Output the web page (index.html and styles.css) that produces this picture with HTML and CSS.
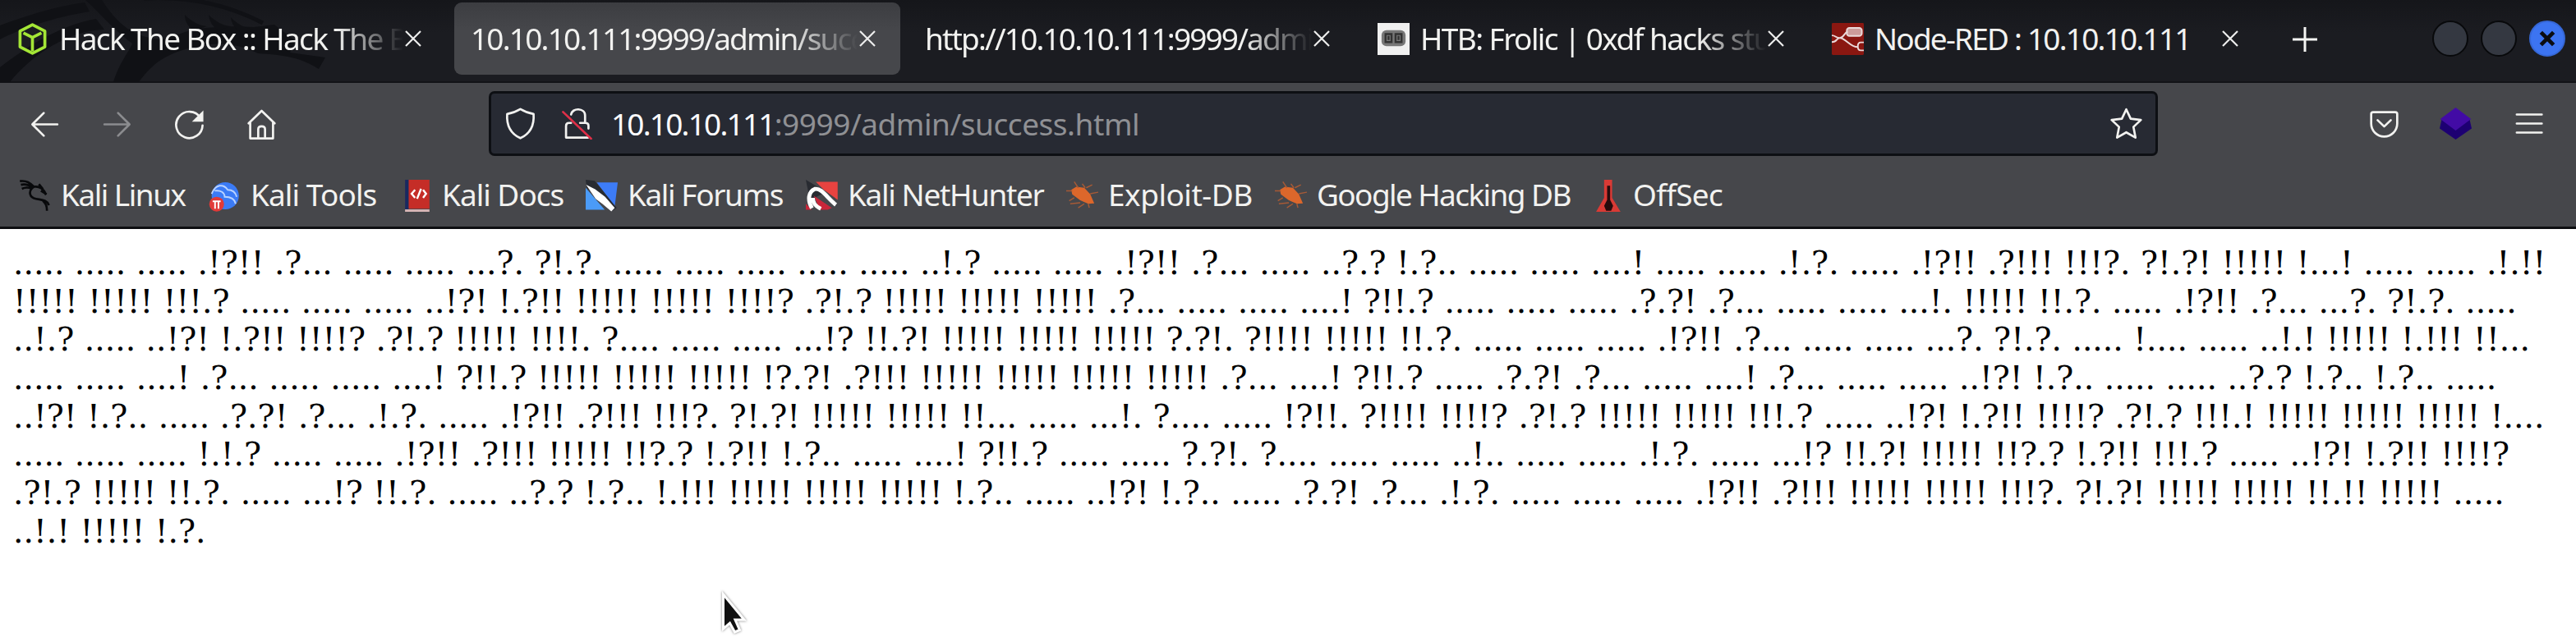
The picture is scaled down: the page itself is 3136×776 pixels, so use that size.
FILE: index.html
```html
<!DOCTYPE html>
<html lang="en">
<head>
<meta charset="utf-8">
<title>10.10.10.111:9999/admin/success.html</title>
<link rel="stylesheet" href="styles.css">
</head>
<body>
<header class="tabbar">
  <svg class="dragon" width="400" height="100" viewBox="0 0 400 100">
    <path class="shade" d="M0 31C30 20 65 8 103 3l6 11C65 21 25 35 0 48zM0 82C35 55 75 30 117 23l10 13C85 37 40 65 12 100H0zM104 0h20c18 28 38 47 75 48l35-12c25-3 45-5 75-3l25-3 26 20-7 14 43 6-8 14c-22-14-42-17-74-19-25-12-45-13-65-10-43 7-62 20-80 45h-31c8-25 18-35 23-47-22-16-42-40-57-53z"/>
    <path class="shade" d="M225 18c9 9 17 13 27 14l-16 5c-7-4-11-11-11-19zM254 18c9 9 17 13 27 14l-15 5c-7-4-11-11-12-19zM281 21c8 9 19 14 32 16l-18 4c-8-5-13-11-14-20z"/>
    <path class="line" d="M175-2c56-3 105 9 145 30"/>
  </svg>
  <div class="tab">
    <svg class="ico" viewBox="0 0 16 16"><g fill="none" stroke="#a4e636" stroke-width="1.5" stroke-linejoin="round"><path d="M8 .9l6.2 3.2v7.8L8 15.1l-6.2-3.2V4.100z"/><path d="M3.500 5L8 7.200 12.500 5M8 7.200v7"/></g></svg>
    <span class="title t1">Hack The Box :: Hack The Box</span>
    <svg class="x" viewBox="0 0 20 20"><path d="M1 1l18 18M19 1L1 19"/></svg>
  </div>
  <div class="tab active">
    <span class="title t2">10.10.10.111:9999/admin/succ</span>
    <svg class="x" viewBox="0 0 20 20"><path d="M1 1l18 18M19 1L1 19"/></svg>
  </div>
  <div class="tab">
    <span class="title t3">http://10.10.10.111:9999/admi</span>
    <svg class="x" viewBox="0 0 20 20"><path d="M1 1l18 18M19 1L1 19"/></svg>
  </div>
  <div class="tab">
    <svg class="ico" viewBox="0 0 16 16"><path fill="#f0f0f0" d="M0 0h16v16H0z"/><rect x="2" y="3.600" width="12" height="8" rx="2.500" fill="#777"/><path fill="none" stroke="#333" d="M4 5.500h3v4H4zM9 5.500h3v4H9zM5.500 6.500v2M10.500 6.500v2"/></svg>
    <span class="title t4">HTB: Frolic | 0xdf hacks stu</span>
    <svg class="x" viewBox="0 0 20 20"><path d="M1 1l18 18M19 1L1 19"/></svg>
  </div>
  <div class="tab">
    <svg class="ico" viewBox="0 0 16 16"><rect width="16" height="16" rx=".6" fill="#8a1711"/><g fill="none" stroke="#eadada" stroke-width=".8"><rect x="7.500" y="2.500" width="7.500" height="4" rx="1.300" fill="#cc9c9a"/><path d="M0 6.200c2 0 2 1.300 4 1.300s2-2.500 4-3.200M0 9.500c3 0 2-2 4-2 3 0 5 4.500 9 4.500"/><path d="M16 9.700h-1.500c-1 0-1.500.800-1.500 2s.5 2 1.500 2H16"/></g></svg>
    <span class="title t5">Node-RED : 10.10.10.111</span>
    <svg class="x" viewBox="0 0 20 20"><path d="M1 1l18 18M19 1L1 19"/></svg>
  </div>
  <svg class="plus" viewBox="0 0 30 30"><path d="M15 0v30M0 15h30"/></svg>
  <div class="window-buttons">
    <i class="dot"></i><i class="dot"></i>
    <i class="dot close"><svg viewBox="0 0 42 42"><path d="M13 13l16 16M29 13L13 29"/></svg></i>
  </div>
</header>

<nav class="toolbar">
  <div class="nav-buttons">
    <svg viewBox="0 0 16 16"><path d="M14.300 8H2M7.500 2.300L1.800 8l5.700 5.700"/></svg>
    <svg class="dim" viewBox="0 0 16 16"><path d="M1.700 8H14M8.500 2.300L14.200 8l-5.700 5.700"/></svg>
    <svg viewBox="0 0 16 16"><path d="M13.500 4.600A6.600 6.600 0 1 0 14.600 8.500"/><path class="solid" d="M15 1v5.700H9.300z"/></svg>
    <svg viewBox="0 0 16 16"><path d="M1.500 7.500L8 1.200l6.500 6.300M2.300 7v8h11.400V7M6.300 15v-4.500c0-1 .700-1.500 1.700-1.500s1.700.500 1.700 1.500V15"/></svg>
  </div>
  <div class="urlbar">
    <svg viewBox="0 0 16 16"><path d="M8 .8C6 2 3.500 2.900 1.400 3.200 1 9 3 13 8 15.300 13 13 15 9 14.600 3.200 12.500 2.900 10 2 8 .8z"/></svg>
    <svg class="lock" viewBox="0 0 16 16"><path d="M5 3.500C5.500 0 12 0 12 4v3.700M5 7.700h-1c-1 0-1.500.500-1.500 1.500V15h11M13.700 10.500V9c0-.900-.500-1.300-1.500-1.300H9.500"/><path class="slash" d="M1 2.200L15 15.600"/></svg>
    <span class="url"><b>10.10.10.111</b>:9999/admin/success.html</span>
    <svg class="star" viewBox="0 0 16 16"><path d="M8 .9l2.200 4.700 5.100.600-3.700 3.500 1 5.300L8 12.400 3.400 15l1-5.300L.7 6.200l5.100-.6z"/></svg>
  </div>
  <div class="tools">
    <svg viewBox="0 0 16 16"><path d="M2.500 2.300h11c.600 0 1 .400 1 1V8a6.500 6.500 0 0 1-13 0V3.300c0-.600.400-1 1-1zM4.700 6.300L8 9.500l3.300-3.200"/></svg>
    <svg viewBox="0 0 16 16"><path fill="#1d0072" stroke="none" d="M8 16L0 10.500 1 6h14l1 4.500z"/><path fill="#420ba5" stroke="none" d="M8 0l7.700 5.700L8 11.500.3 5.700z"/></svg>
    <svg viewBox="0 0 16 16"><path d="M2 3.500h12.500M2 8h12.500M2 12.500h12.500"/></svg>
  </div>
</nav>

<nav class="bookmarks">
  <a class="bm"><svg viewBox="0 0 16 16"><path fill="none" stroke="#08090b" stroke-width="1.100" d="M.5.700C4 .300 5.500 1.500 7.500 3.500 10 3 12.500 4.500 13.500 7.500M1 2.500c2-.500 4 0 6 1.500M1.500 4.500C3.500 3.500 5 3.800 6.500 4.500M10 2.200l2 2.500M7.500 3.500C5 5 4.800 8 7.500 9.200c3 1 6.500.500 7.500 3.500M12 10.500c1.500 1.500 2 2.500 2 5M11 5.500l2.800 1.700"/></svg><span class="b1">Kali Linux</span></a>
  <a class="bm"><svg viewBox="0 0 16 16"><circle cx="8.300" cy="8" r="6.800" fill="#3b7bf5"/><path d="M1.500 7c2-5 6-5 8-2 2.500 0 4 1.500 4.500 3.500M3 5.500c3-.500 5 1 5 3 3 0 5 1 5.500 3.500" fill="none" stroke="#b9d3ff" stroke-width=".8"/><circle cx="4" cy="12.200" r="3.700" fill="#e13a38"/><path d="M2 10.800h4M3.200 11v3.500M4.900 11v3.500" stroke="#fff" stroke-width=".8"/></svg><span class="b2">Kali Tools</span></a>
  <a class="bm"><svg viewBox="0 0 16 16"><path fill="#c52d27" d="M2.500 0h12.200v14.500H2.500z"/><path fill="#172a60" d="M2.500 0h1.800v15H2.500z"/><path fill="#d7b5b5" d="M2.500 14.800h12.200V16H2.500z"/><path fill="none" stroke="#fff" d="M7.500 5L5.800 7l1.700 2M11.500 5l1.500 2-1.500 2M10.500 4.500L8.500 9.500"/></svg><span class="b3">Kali Docs</span></a>
  <a class="bm"><svg viewBox="0 0 16 16"><path fill="#3d7cf7" d="M5.500 1.300H16l-1.500 12z"/><path fill="#4b9bf7" d="M0 4v11h9.500z"/><path fill="#282b31" d="M0 0l4.500.500 11 13.500-2 1.500L.5 4z"/><path fill="#fff" d="M.2 2.500l4.500 2.200 5 3.800 4.800 5.600-1.700 1.700-4.500-3.800L5 9.500z"/></svg><span class="b4">Kali Forums</span></a>
  <a class="bm"><svg viewBox="0 0 16 16"><path fill="#282b31" d="M0 0l5 3 3.500 4L2 10z"/><path fill="#e84340" d="M5 1h10.900v9L9 5z"/><path fill="#c9263a" d="M4 8l9 6-2 1H7zM0 12l3 3H0z"/><path fill="none" stroke="#fff" stroke-width="2" d="M3 14.200C.8 10 1.200 6 4.500 4.600 8 4 10.500 9 15 12.500M3.500 9c0 2.500 1 4 4 5.500"/></svg><span class="b5">Kali NetHunter</span></a>
  <a class="bm"><svg viewBox="0 0 16 16"><path fill="#dc672b" d="M2.500 5L5 3.500l4 .5 3 3.200 2 4.600-3 .200-4-1.700-4-3z"/><path stroke="#a65a36" stroke-width=".6" d="M0 5.500h3M4 1l2 3M8 2l1.500 2M10 4l3-1.500M12 7l4-.800M4 9l-2.500 1.500M7 11.500l-5 .5M9 12l-3 2M11 12l.5 2"/></svg><span class="b6">Exploit-DB</span></a>
  <a class="bm"><svg viewBox="0 0 16 16"><path fill="#dc672b" d="M2.500 5L5 3.500l4 .5 3 3.200 2 4.600-3 .200-4-1.700-4-3z"/><path stroke="#a65a36" stroke-width=".6" d="M0 5.500h3M4 1l2 3M8 2l1.500 2M10 4l3-1.500M12 7l4-.800M4 9l-2.500 1.500M7 11.500l-5 .5M9 12l-3 2M11 12l.5 2"/></svg><span class="b7">Google Hacking DB</span></a>
  <a class="bm"><svg viewBox="0 0 16 16"><path fill="#d93a35" d="M6.500 0h4v9l4.200 7H2.500l4-7z"/><path fill="#260b0c" d="M8 3h1.500v7l1.500 3-1 2.500H7.500L6.500 13 8 10z"/></svg><span class="b8">OffSec</span></a>
</nav>

<main class="page">
  <div>..... ..... ..... .!?!! .?... ..... ..... ...?. ?!.?. ..... ..... ..... ..... ..... ..!.? ..... ..... .!?!! .?... ..... ..?.? !.?.. ..... ..... ....! ..... ..... .!.?. ..... .!?!! .?!!! !!!?. ?!.?! !!!!! !...! ..... ..... .!.!!</div>
  <div>!!!!! !!!!! !!!.? ..... ..... ..... ..!?! !.?!! !!!!! !!!!! !!!!? .?!.? !!!!! !!!!! !!!!! .?... ..... ..... ....! ?!!.? ..... ..... ..... .?.?! .?... ..... ..... ...!. !!!!! !!.?. ..... .!?!! .?... ...?. ?!.?. .....</div>
  <div>..!.? ..... ..!?! !.?!! !!!!? .?!.? !!!!! !!!!. ?.... ..... ..... ...!? !!.?! !!!!! !!!!! !!!!! ?.?!. ?!!!! !!!!! !!.?. ..... ..... ..... .!?!! .?... ..... ..... ...?. ?!.?. ..... !.... ..... ..!.! !!!!! !.!!! !!...</div>
  <div>..... ..... ....! .?... ..... ..... ....! ?!!.? !!!!! !!!!! !!!!! !?.?! .?!!! !!!!! !!!!! !!!!! !!!!! .?... ....! ?!!.? ..... .?.?! .?... ..... ....! .?... ..... ..... ..!?! !.?.. ..... ..... ..?.? !.?.. !.?.. .....</div>
  <div>..!?! !.?.. ..... .?.?! .?... .!.?. ..... .!?!! .?!!! !!!?. ?!.?! !!!!! !!!!! !!... ..... ...!. ?.... ..... !?!!. ?!!!! !!!!? .?!.? !!!!! !!!!! !!!.? ..... ..!?! !.?!! !!!!? .?!.? !!!.! !!!!! !!!!! !!!!! !....</div>
  <div>..... ..... ..... !.!.? ..... ..... .!?!! .?!!! !!!!! !!?.? !.?!! !.?.. ..... ....! ?!!.? ..... ..... ?.?!. ?.... ..... ..... ..!.. ..... ..... .!.?. ..... ...!? !!.?! !!!!! !!?.? !.?!! !!!.? ..... ..!?! !.?!! !!!!?</div>
  <div>.?!.? !!!!! !!.?. ..... ...!? !!.?. ..... ..?.? !.?.. !.!!! !!!!! !!!!! !!!!! !.?.. ..... ..!?! !.?.. ..... .?.?! .?... .!.?. ..... ..... ..... .!?!! .?!!! !!!!! !!!!! !!!?. ?!.?! !!!!! !!!!! !!.!! !!!!! .....</div>
  <div>..!.! !!!!! !.?.</div>
</main>
<svg class="cursor" width="36" height="54" viewBox="0 0 36 54"><path d="M4.500 4v42l8-7 6 11 6-2.500-5.500-12.500h11z"/></svg>
</body>
</html>
```
FILE: styles.css
```css
* { box-sizing: border-box; }
body {
  margin: 0;
  width: 3136px;
  height: 776px;
  overflow: hidden;
  background: #fff;
  font-family: "Noto Sans", "Open Sans", sans-serif;
  font-size: 37px;
  color: #f2f2f0;
}
svg { display: block; flex: none; }

/* tab strip */
.tabbar {
  position: relative;
  display: flex;
  height: 101px;
  background: linear-gradient(#15161a, #1b1c21 40%, #1b1c21);
  border-bottom: 2px solid #121317;
}
.dragon { position: absolute; left: 0; top: 0; }
.shade { fill: #101115; }
.line { fill: none; stroke: #101115; stroke-width: 5; }
.tab {
  position: relative;
  display: flex;
  align-items: center;
  width: 543px;
  height: 88px;
  margin: 3px 10px 0 0;
  padding: 0 29px 0 20px;
  border-radius: 9px;
}
.tab.active { background: linear-gradient(#3c3d41, #46474b 40%); }
.tab .ico { width: 39px; height: 39px; margin-right: 13px; }
.tab:nth-of-type(n+4) { padding-left: 18px; }
.title {
  flex: 1;
  width: 0;
  white-space: nowrap;
  line-height: 60px;
  -webkit-mask-image: linear-gradient(90deg, #000 calc(100% - 84px), transparent calc(100% - 2px));
  mask-image: linear-gradient(90deg, #000 calc(100% - 84px), transparent calc(100% - 2px));
}
.t1 { letter-spacing: -1.65px; }
.t2 { letter-spacing: -1.8px; }
.t3 { letter-spacing: -1.85px; }
.t4 { letter-spacing: -1.6px; }
.t5 { letter-spacing: -1.8px; -webkit-mask-image: none; mask-image: none; }
.x { width: 20px; height: 20px; fill: none; stroke: #eee; stroke-width: 2.2; }
.tab .x { margin-right: 1px; }
.plus { width: 30px; height: 30px; margin: 33px 0 0 26px; fill: none; stroke: #f5f5f3; stroke-width: 3; }
.window-buttons { display: flex; gap: 15px; margin: 25px 13px 0 auto; }
.dot { width: 44px; height: 44px; border-radius: 50%; background: #343841; border: 2px solid #08090b; }
.dot.close { background: #3c74f1; border-color: #3567d6; }
.dot svg { width: 40px; height: 40px; fill: none; stroke: #0b0c10; stroke-width: 5; }

/* navigation toolbar */
.toolbar {
  display: flex;
  align-items: flex-start;
  height: 99px;
  padding-top: 10px;
  background: #46474b;
}
.toolbar svg {
  width: 39px;
  height: 39px;
  fill: none;
  stroke: #f2f2f0;
  stroke-width: 1.1;
  stroke-linecap: round;
  stroke-linejoin: round;
}
.nav-buttons { display: flex; gap: 49px; width: 595px; padding: 21px 0 0 35px; }
.toolbar .dim { stroke: #8b8c8f; }
.toolbar .solid { fill: #f2f2f0; stroke: none; }
.urlbar {
  display: flex;
  align-items: center;
  width: 2032px;
  height: 79px;
  padding: 0 16px;
  background: #272a33;
  border: 3px solid #0d0f13;
  border-radius: 7px;
}
.urlbar .lock { margin-left: 30px; }
.urlbar .slash { stroke: #df2f48; }
.url { flex: 1; margin-left: 22px; color: #8f9094; white-space: nowrap; letter-spacing: -.45px; }
.url b { font-weight: 400; color: #fbfbfe; letter-spacing: -1.8px; }
.tools { display: flex; gap: 48px; margin-left: 256px; padding-top: 20px; }
.tools svg:last-child { margin-left: 2px; }

/* bookmarks */
.bookmarks {
  display: grid;
  grid-template-columns: 231px 233px 226px 268px 317px 254px 385px 300px;
  height: 79px;
  padding-left: 23px;
  background: #46474b;
  border-bottom: 3px solid #0d0e11;
}
.bm { display: flex; align-items: center; gap: 12px; white-space: nowrap; }
.bm svg { width: 39px; height: 39px; }
.bm span { line-height: 50px; padding-bottom: 3px; }
.b1 { letter-spacing: -1.5px; }
.b2 { letter-spacing: -.9px; }
.b3 { letter-spacing: -1px; }
.b4 { letter-spacing: -1.4px; }
.b5 { letter-spacing: -1.35px; }
.b6 { letter-spacing: -.5px; }
.b7 { letter-spacing: -1.6px; }
.b8 { letter-spacing: -.7px; }

/* document */
.page {
  padding: 19px 0 0 16px;
  color: #000;
  font-family: "DejaVu Serif", serif;
  font-size: 39.26px;
  line-height: 46.67px;
  white-space: nowrap;
}
.cursor { position: absolute; left: 876px; top: 720px; fill: #111; stroke: #fff; stroke-width: 3; filter: drop-shadow(0 0 1.5px #777); }
```
